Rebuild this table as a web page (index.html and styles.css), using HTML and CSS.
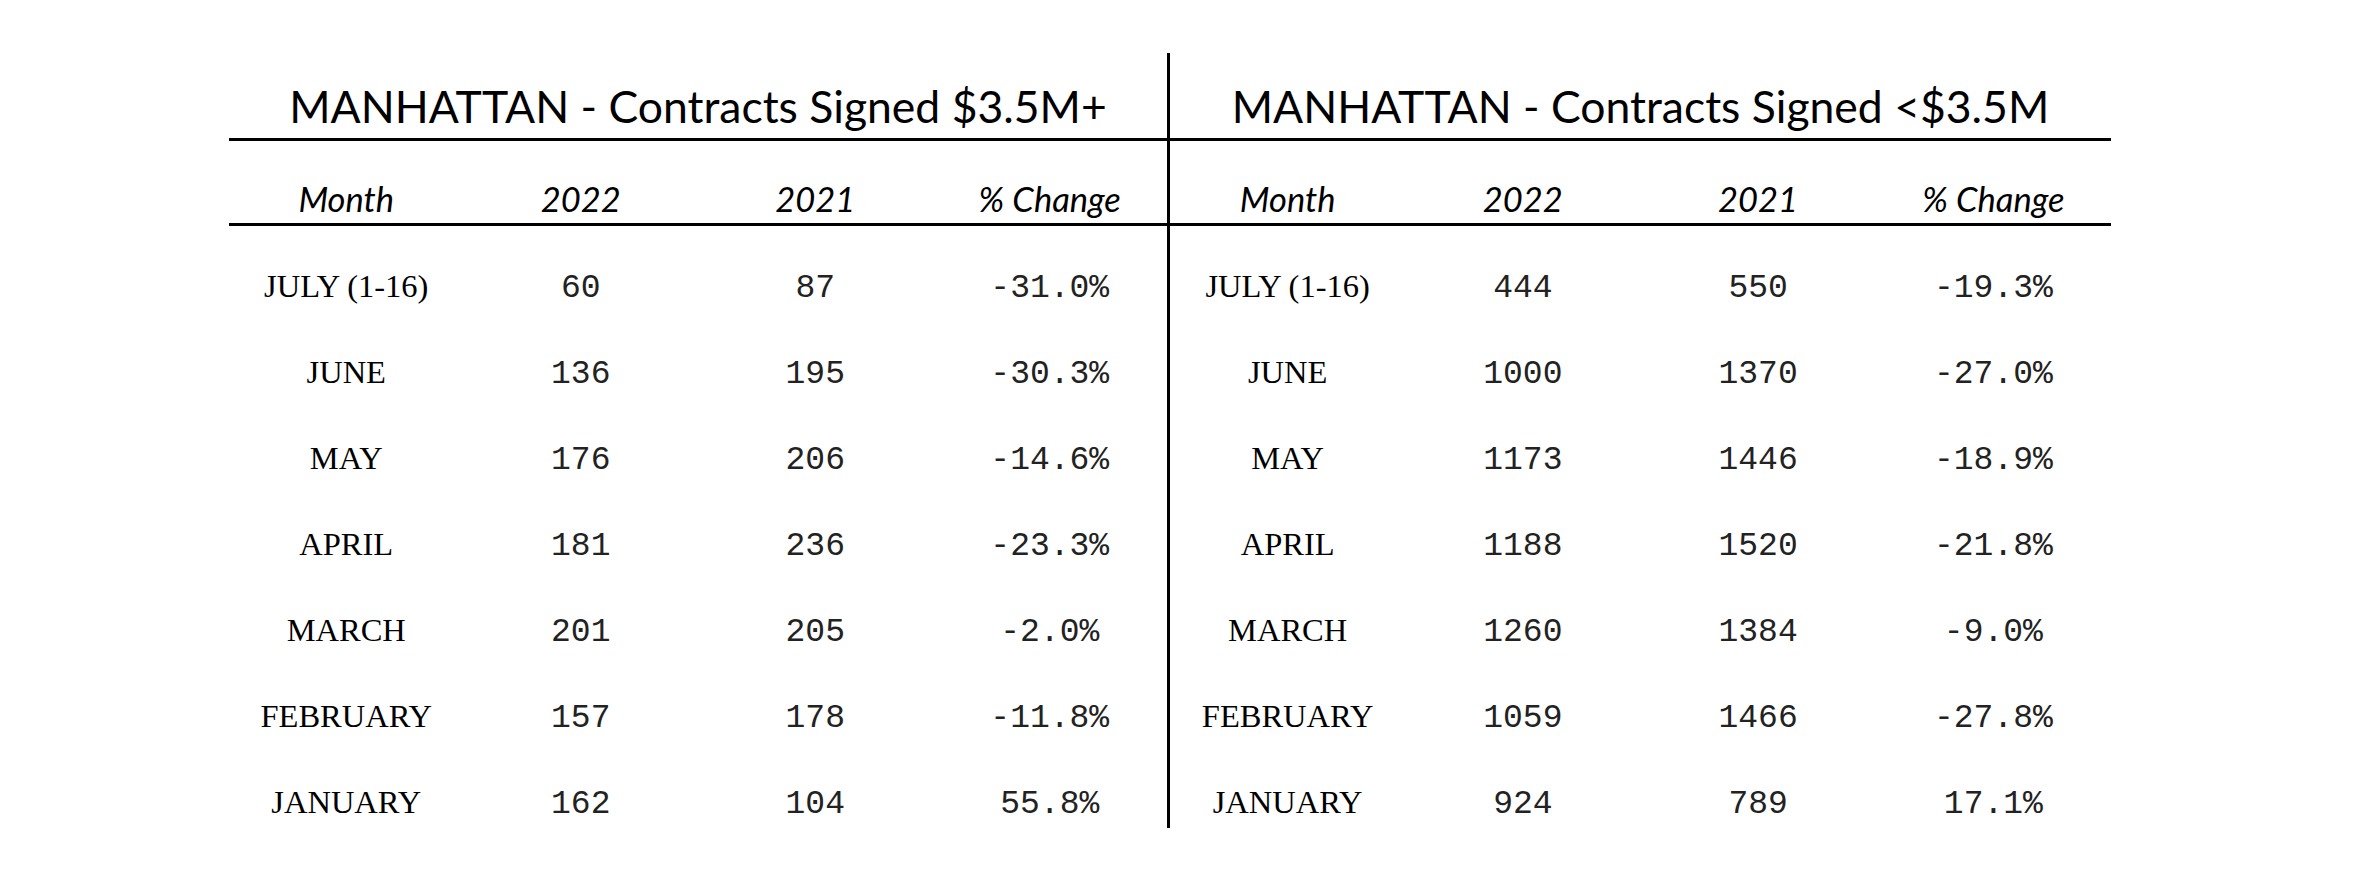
FILE: index.html
```html
<!DOCTYPE html>
<html>
<head>
<meta charset="utf-8">
<link rel="stylesheet" href="styles.css">
</head>
<body>
<div class="wrap">
  <section class="panel panel-left">
    <h2 class="title">MANHATTAN - Contracts Signed $3.5M+</h2>
    <div class="row head"><span>Month</span><span>2022</span><span>2021</span><span>% Change</span></div>
    <div class="row"><span class="m">JULY (1-16)</span><span class="n">60</span><span class="n">87</span><span class="n">-31.0%</span></div>
    <div class="row"><span class="m">JUNE</span><span class="n">136</span><span class="n">195</span><span class="n">-30.3%</span></div>
    <div class="row"><span class="m">MAY</span><span class="n">176</span><span class="n">206</span><span class="n">-14.6%</span></div>
    <div class="row"><span class="m">APRIL</span><span class="n">181</span><span class="n">236</span><span class="n">-23.3%</span></div>
    <div class="row"><span class="m">MARCH</span><span class="n">201</span><span class="n">205</span><span class="n">-2.0%</span></div>
    <div class="row"><span class="m">FEBRUARY</span><span class="n">157</span><span class="n">178</span><span class="n">-11.8%</span></div>
    <div class="row"><span class="m">JANUARY</span><span class="n">162</span><span class="n">104</span><span class="n">55.8%</span></div>
  </section>
  <div class="divider"></div>
  <section class="panel panel-right">
    <h2 class="title">MANHATTAN - Contracts Signed &lt;$3.5M</h2>
    <div class="row head"><span>Month</span><span>2022</span><span>2021</span><span>% Change</span></div>
    <div class="row"><span class="m">JULY (1-16)</span><span class="n">444</span><span class="n">550</span><span class="n">-19.3%</span></div>
    <div class="row"><span class="m">JUNE</span><span class="n">1000</span><span class="n">1370</span><span class="n">-27.0%</span></div>
    <div class="row"><span class="m">MAY</span><span class="n">1173</span><span class="n">1446</span><span class="n">-18.9%</span></div>
    <div class="row"><span class="m">APRIL</span><span class="n">1188</span><span class="n">1520</span><span class="n">-21.8%</span></div>
    <div class="row"><span class="m">MARCH</span><span class="n">1260</span><span class="n">1384</span><span class="n">-9.0%</span></div>
    <div class="row"><span class="m">FEBRUARY</span><span class="n">1059</span><span class="n">1466</span><span class="n">-27.8%</span></div>
    <div class="row"><span class="m">JANUARY</span><span class="n">924</span><span class="n">789</span><span class="n">17.1%</span></div>
  </section>
</div>
</body>
</html>
```

FILE: styles.css
```css
html, body {
  margin: 0;
  padding: 0;
  background: #fff;
  color: #000;
}

.wrap {
  display: flex;
  padding: 53px 0 0 229px;
}

.panel-left { width: 938px; }
.panel-right { width: 941px; }

.divider {
  width: 3px;
  height: 775px;
  background: #000;
}

.title {
  margin: 0;
  height: 88px;
  box-sizing: border-box;
  padding-top: 31px;
  border-bottom: 3px solid #000;
  font-family: Lato, "Noto Sans", sans-serif;
  font-weight: 400;
  font-size: 44.5px;
  line-height: 1;
  text-align: center;
  white-space: nowrap;
}

.row {
  display: grid;
  grid-template-columns: repeat(4, 1fr);
  align-items: baseline;
  height: 86px;
  box-sizing: border-box;
  padding-top: 34px;
  text-align: center;
}

.row.head {
  height: 85px;
  padding-top: 41px;
  border-bottom: 3px solid #000;
  font-family: Lato, "Noto Sans", sans-serif;
  font-style: italic;
  font-size: 34.5px;
  line-height: 1;
}

.m {
  font-family: "Liberation Serif", "Times New Roman", serif;
  font-size: 32.5px;
  line-height: 52px;
}

.n {
  font-family: "Liberation Mono", "Courier New", monospace;
  font-size: 33px;
  line-height: 52px;
  color: #222;
}
```
